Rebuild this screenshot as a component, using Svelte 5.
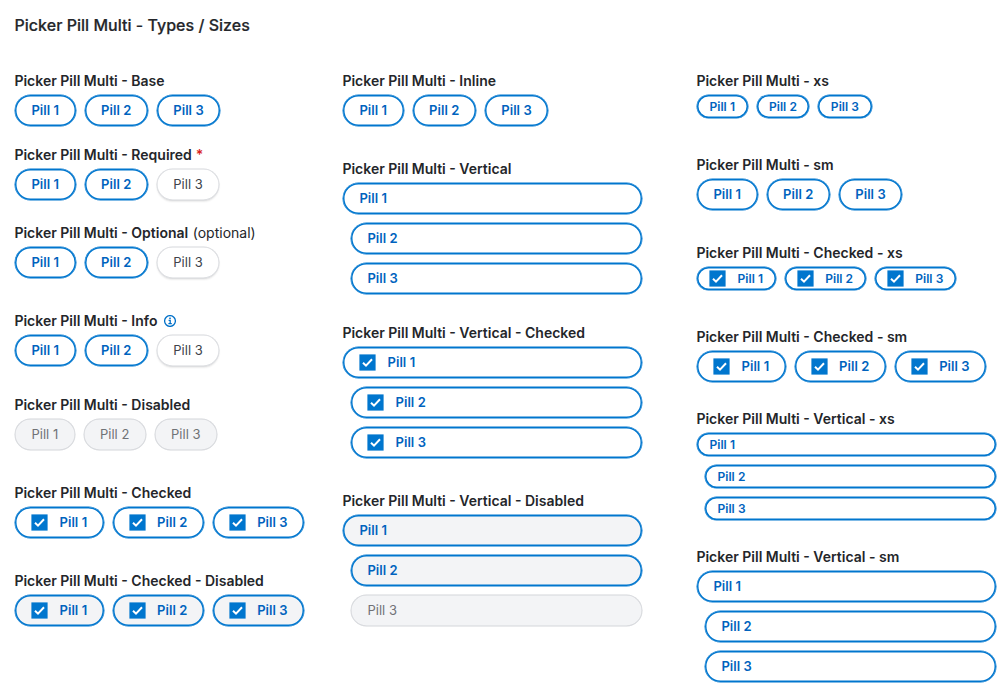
<script>
  const row = (name, top, opts = {}) => ({ name, top, states: 'sss', size: 'sm', ...opts });

  // `top` is the space above the group's label, in pixels.
  const columns = [
    [
      row('Base', 0),
      row('Required', 18, { required: true, states: 'ssu' }),
      row('Optional', 22, { optional: true, states: 'ssu' }),
      row('Info', 32, { info: true, states: 'ssu' }),
      row('Disabled', 28, { disabled: true, states: 'uuu' }),
      row('Checked', 32, { check: true }),
      row('Checked - Disabled', 32, { check: true, disabled: true })
    ],
    [
      row('Inline', 0),
      row('Vertical', 32, { vertical: true }),
      row('Vertical - Checked', 28, { vertical: true, check: true }),
      row('Vertical - Disabled', 32, { vertical: true, disabled: true, states: 'ssu' })
    ],
    [
      row('xs', 0, { size: 'xs' }),
      row('sm', 36),
      row('Checked - xs', 32, { size: 'xs', check: true }),
      row('Checked - sm', 36, { check: true }),
      row('Vertical - xs', 26, { size: 'xs', vertical: true }),
      row('Vertical - sm', 26, { vertical: true })
    ]
  ];
</script>

<main>
  <h1>Picker Pill Multi - Types / Sizes</h1>
  <div class="columns">
    {#each columns as groups}
      <div class="column">
        {#each groups as g}
          <section style:margin-top="{g.top}px">
            <h2>
              <span>Picker Pill Multi - {g.name}</span>
              {#if g.required}<span class="required">*</span>{/if}
              {#if g.optional}<span class="optional">(optional)</span>{/if}
              {#if g.info}
                <svg class="info" viewBox="0 0 12 12" width="12" height="12">
                  <circle cx="6" cy="6" r="5.4" />
                  <path d="M4.6 5.4H6.2V8.5M4.4 8.6H7.8" />
                  <rect x="5.2" y="2.6" width="1.6" height="1.5" />
                </svg>
              {/if}
            </h2>
            <div class="pills {g.size}" class:vertical={g.vertical}>
              {#each g.states as s, i}
                <div class="pill" class:selected={s === 's'} class:disabled={g.disabled} class:checked={g.check}>
                  {#if g.check}
                    <svg class="check" viewBox="0 0 17 17" width="17" height="17">
                      <rect x=".4" y=".4" width="16.2" height="16.2" />
                      <path d="M4 8.7L7 11.6L13 5.3" />
                    </svg>
                  {/if}
                  <span>Pill {i + 1}</span>
                </div>
              {/each}
            </div>
          </section>
        {/each}
      </div>
    {/each}
  </div>
</main>

<style>
  :global(body) {
    background: #fff;
    overflow: hidden;
  }

  main {
    box-sizing: border-box;
    width: 997px;
    height: 691px;
    padding: 15px 0 0 15px;
    overflow: hidden;
    font-family: Inter, sans-serif;
    color: #24262a;
  }

  h1 {
    margin: 0 0 36px -0.5px;
    font-size: 16px;
    line-height: 20px;
    font-weight: 500;
    letter-spacing: 0.025px;
    -webkit-text-stroke: 0.2px currentColor;
  }

  .columns {
    display: grid;
    grid-template-columns: 328px 354px 299px;
    align-items: start;
  }

  .column {
    display: flow-root;
  }

  h2 {
    display: flex;
    align-items: center;
    height: 20px;
    margin: 0 0 4px -0.6px;
    font-size: 14px;
    line-height: 20px;
    font-weight: 600;
    white-space: nowrap;
  }

  .required {
    margin-left: 4px;
    color: #d91f1f;
  }

  .optional {
    margin-left: 4.5px;
    font-weight: 400;
  }

  .info {
    margin-left: 6.6px;
    fill: none;
    stroke: #0070c8;
    stroke-width: 1.3;
  }

  .info rect {
    fill: #0070c8;
    stroke: none;
  }

  .pills {
    display: flex;
    gap: 9px;
    padding-bottom: 1px;
  }

  .pills.vertical {
    flex-direction: column;
    width: 299px;
  }

  .vertical .pill:not(:first-child) {
    margin-left: 8px;
  }

  .pill {
    box-sizing: border-box;
    display: flex;
    align-items: center;
    height: 31px;
    padding: 0 16.3px 1px 16.4px;
    border-radius: 15.5px;
    background: #fff;
    box-shadow: 0 0 0 0.5px #d5d7db, inset 0 0 0 0.5px #d5d7db, 0 1.5px 2px rgba(0, 0, 0, 0.12);
    color: #40434a;
    font-size: 13px;
    line-height: 16px;
    font-weight: 400;
    letter-spacing: 0.02px;
    white-space: nowrap;
  }

  .pill.disabled {
    background: #f3f4f6;
    color: #707276;
    box-shadow: 0 0 0 0.5px #d3d5d9, inset 0 0 0 0.5px #d3d5d9;
  }

  .pill.selected {
    padding-right: 16.5px;
    color: #0063be;
    font-weight: 600;
    letter-spacing: 0.06px;
    box-shadow: 0 0 0 0.5px #0076ce, inset 0 0 0 1.5px #0076ce;
  }

  .xs .pill.selected {
    height: 23px;
    padding: 0 12.5px 0 12.4px;
    font-size: 12px;
  }

  .pill.selected.checked {
    padding-left: 16px;
    padding-right: 16.3px;
  }

  .xs .pill.selected.checked {
    padding-left: 12px;
    padding-right: 12.5px;
  }

  .check {
    flex: none;
    margin: 1px 11.5px 0 0;
  }

  .xs .check {
    margin-top: 0;
  }

  .check rect {
    fill: #0076ce;
  }

  .check path {
    fill: none;
    stroke: #fff;
    stroke-width: 2;
  }
</style>
